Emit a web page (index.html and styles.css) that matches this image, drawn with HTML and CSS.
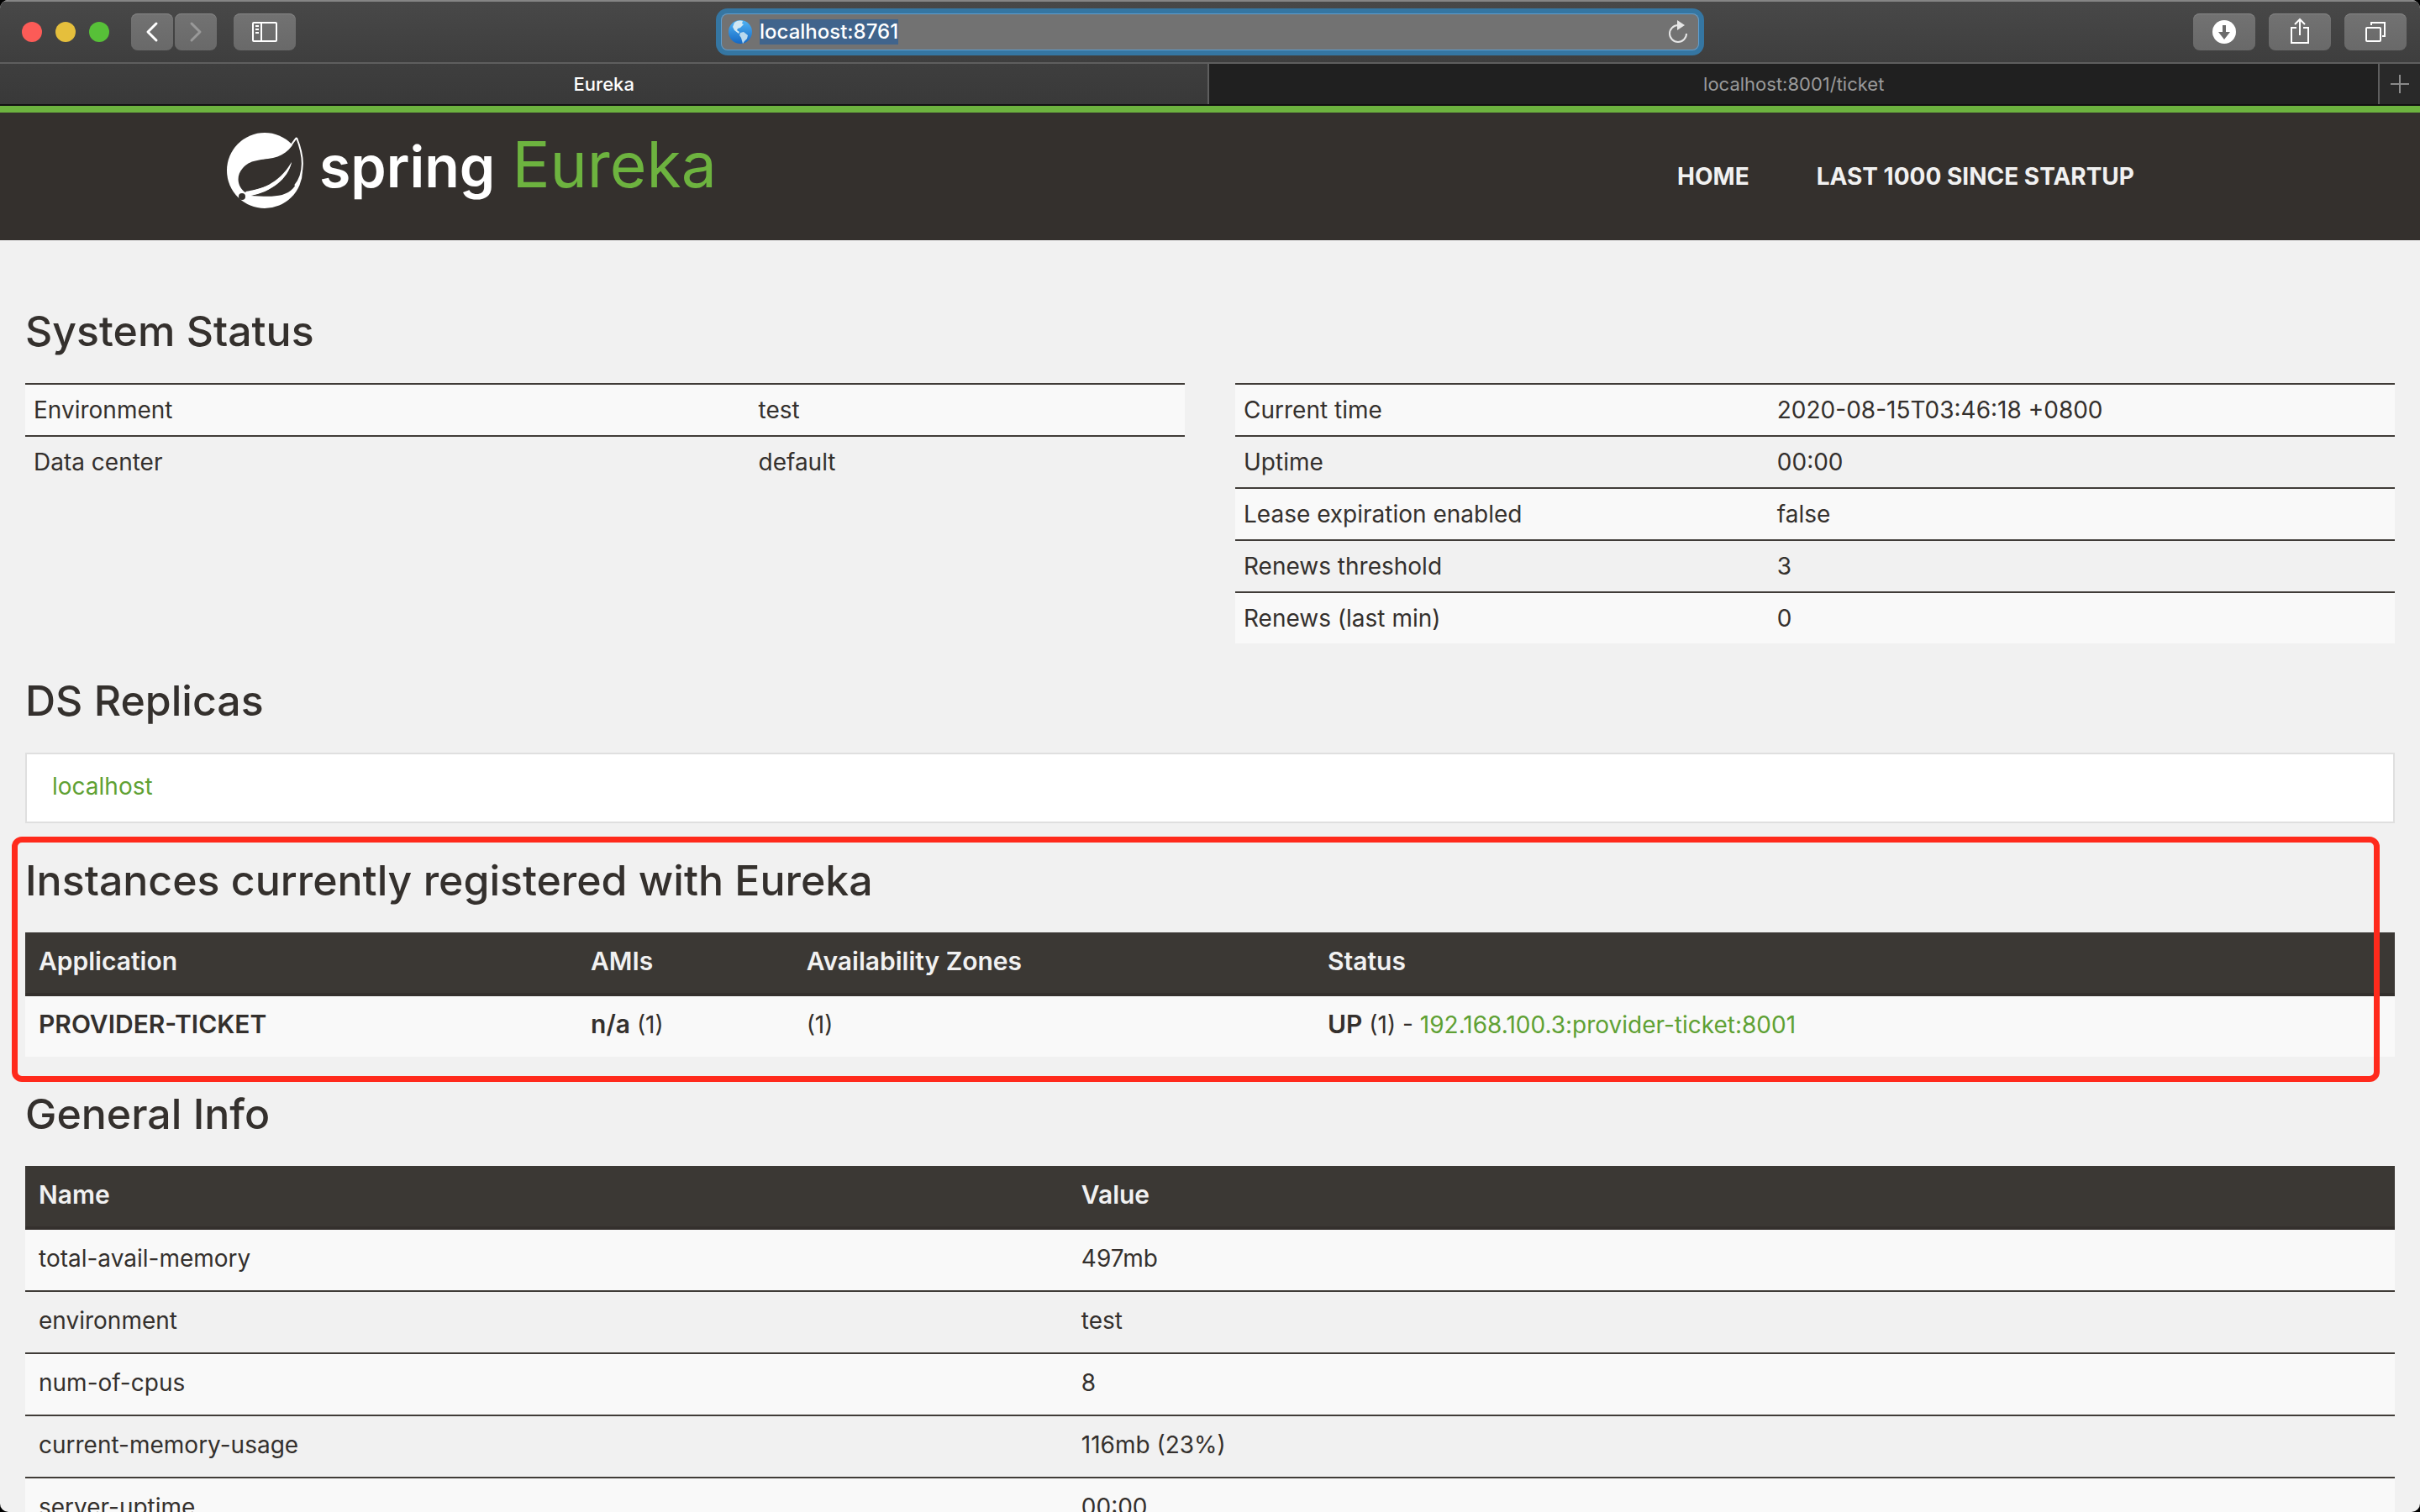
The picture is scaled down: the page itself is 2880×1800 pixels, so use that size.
FILE: index.html
```html
<!DOCTYPE html>
<html lang="en">
<head>
<meta charset="utf-8">
<title>Eureka</title>
<link rel="stylesheet" href="styles.css">
</head>
<body>
<div class="window">
  <header class="toolbar">
    <div class="toolbar-side">
      <div class="lights"><span class="light red"></span><span class="light yellow"></span><span class="light green"></span></div>
      <div class="history">
        <button class="tool narrow" aria-label="Back"><svg width="50" height="44" viewBox="0 0 50 44"><path d="M30 12 20 22l10 10" fill="none" stroke="#fff" stroke-width="3" stroke-linecap="round" stroke-linejoin="round"/></svg></button>
        <button class="tool narrow" aria-label="Forward" disabled><svg width="50" height="44" viewBox="0 0 50 44"><path d="M20 12l10 10-10 10" fill="none" stroke="#999" stroke-width="3" stroke-linecap="round" stroke-linejoin="round"/></svg></button>
      </div>
      <button class="tool" aria-label="Show sidebar"><svg width="74" height="44" viewBox="0 0 74 44" fill="none" stroke="#fff" stroke-width="2"><rect x="23" y="11" width="28" height="22" rx="1"/><path d="M33 11v22M26 15h4M26 19h4M26 23h4"/></svg></button>
    </div>
    <form class="address">
      <svg width="30" height="30" viewBox="0 0 30 30"><defs><linearGradient id="sea" x1="0" y1="0" x2="0" y2="1"><stop offset="0" stop-color="#4fb4f5"/><stop offset="1" stop-color="#1568c4"/></linearGradient></defs><circle cx="15" cy="15" r="14" fill="url(#sea)"/><path d="M8 4c3-3 8-3 10-2l-1 3 2 1-4 4-3 1-1 2 3 2-1 2-5-4-2-4z" fill="#cfe8f5"/><path d="M15 16l4-1 5 4-1 4-3 3-2 3-2-7-2-3z" fill="#b9d9ee"/></svg>
      <input class="url" type="text" value="localhost:8761" aria-label="Address" autofocus>
      <button class="reload" type="button" aria-label="Reload"><svg width="26" height="30" viewBox="0 0 26 30"><path d="M13 7a10 10 0 1 0 10 10" fill="none" stroke="#e6e6e6" stroke-width="2"/><path d="M12 1l9 6-9 6z" fill="#e6e6e6"/></svg></button>
    </form>
    <div class="toolbar-side end">
      <button class="tool" aria-label="Downloads"><svg width="74" height="44" viewBox="0 0 74 44"><circle cx="37" cy="22" r="14" fill="#fff"/><path d="M35 14h4v8h5l-7 9-7-9h5z" fill="#6b6b6b"/></svg></button>
      <button class="tool" aria-label="Share"><svg width="74" height="44" viewBox="0 0 74 44" fill="none" stroke="#fff" stroke-width="2"><path d="M33 17h-6v18h20V17h-6M37 26V8M31 13l6-6 6 6"/></svg></button>
      <button class="tool" aria-label="Show all tabs"><svg width="74" height="44" viewBox="0 0 74 44" fill="none" stroke="#fff" stroke-width="2"><rect x="26" y="17" width="17" height="16" rx="1"/><path d="M32 14v-3h16v16h-3"/></svg></button>
    </div>
  </header>
  <div class="tabs">
    <button class="tab active">Eureka</button>
    <button class="tab">localhost:8001/ticket</button>
    <button class="new-tab" aria-label="New tab"><svg width="24" height="24" viewBox="0 0 24 24"><path d="M12 1v22M1 12h22" stroke="#8a8a8a" stroke-width="2"/></svg></button>
  </div>

  <div class="page">
    <nav class="navbar">
      <a class="brand" href="#">
        <svg class="leaf" width="92" height="92" viewBox="0 0 92 92"><circle cx="45" cy="45" r="45" fill="#fff"/><path d="M83 5C80 15 70 27 55 30C38 33 28 32 19 42C10 52 13 65 22 71C40 67 61 62 77 35C72 54 55 69 28 75C50 76 68 78 79 66C94 48 92 30 83 5Z" fill="#34302d"/><path d="M83 6C80 9 79 12 76 15M83 6C91 26 94 47 81 63" fill="none" stroke="#fff" stroke-width="2"/><path d="M22 70C40 67 65 62 77 35C73 55 52 71 28 75z" fill="#fff"/><circle cx="18" cy="76" r="4" fill="#34302d"/></svg>
        <span class="brand-text"><span class="brand-spring">spring</span><span class="brand-eureka">Eureka</span></span>
      </a>
      <div class="nav-links"><a href="#">HOME</a><a href="#">LAST 1000 SINCE STARTUP</a></div>
    </nav>

    <main class="content">
      <section>
        <h1>System Status</h1>
        <div class="columns">
          <table class="compact environment">
            <tbody>
              <tr><td>Environment</td><td>test</td></tr>
              <tr><td>Data center</td><td>default</td></tr>
            </tbody>
          </table>
          <table class="compact runtime">
            <tbody>
              <tr><td>Current time</td><td>2020-08-15T03:46:18 +0800</td></tr>
              <tr><td>Uptime</td><td>00:00</td></tr>
              <tr><td>Lease expiration enabled</td><td>false</td></tr>
              <tr><td>Renews threshold</td><td>3</td></tr>
              <tr><td>Renews (last min)</td><td>0</td></tr>
            </tbody>
          </table>
        </div>
      </section>
      <section>
        <h1>DS Replicas</h1>
        <div class="replicas"><a href="#">localhost</a></div>
      </section>
      <section class="instances">
        <h1>Instances currently registered with Eureka</h1>
        <table class="wide">
          <thead><tr><th class="col-app">Application</th><th class="col-ami">AMIs</th><th class="col-zone">Availability Zones</th><th>Status</th></tr></thead>
          <tbody><tr><td><b>PROVIDER-TICKET</b></td><td><b>n/a</b> (1)</td><td>(1)</td><td><b>UP</b> (1) - <a href="#">192.168.100.3:provider-ticket:8001</a></td></tr></tbody>
        </table>
        <div class="marker"></div>
      </section>
      <section>
        <h1>General Info</h1>
        <table class="wide">
          <thead><tr><th class="col-name">Name</th><th>Value</th></tr></thead>
          <tbody>
            <tr><td>total-avail-memory</td><td>497mb</td></tr>
            <tr><td>environment</td><td>test</td></tr>
            <tr><td>num-of-cpus</td><td>8</td></tr>
            <tr><td>current-memory-usage</td><td>116mb (23%)</td></tr>
            <tr><td>server-uptime</td><td>00:00</td></tr>
          </tbody>
        </table>
      </section>
    </main>
  </div>
</div>
<script src="main.js"></script>
</body>
</html>
```
FILE: main.js
```js
const url = document.querySelector('.url');
url.focus();
url.select();
```
FILE: styles.css
```css
* { box-sizing: border-box; }
body { margin: 0; background: #000; font-family: Inter, "Noto Sans", sans-serif; font-size: 28px; line-height: 40px; color: #34302d; }
button { border: 0; padding: 0; background: none; font: inherit; color: inherit; }
svg { display: block; }
a { color: #5fa134; text-decoration: none; }

.window { height: 100vh; display: flex; flex-direction: column; overflow: hidden; border-radius: 10px; background: #f1f1f1; }

/* browser toolbar */
.toolbar { flex: none; height: 76px; display: flex; justify-content: space-between; align-items: center; padding: 0 16px; border-top: 2px solid #858585; border-bottom: 2px solid #5e5e5e; background: linear-gradient(#484848, #3e3e3e); }
.toolbar-side { flex: 1; display: flex; align-items: center; gap: 20px; }
.toolbar-side.end { justify-content: flex-end; gap: 16px; }
.lights { display: flex; gap: 16px; margin: 0 6px 0 10px; }
.light { width: 24px; height: 24px; border-radius: 50%; }
.red { background: #fc5b57; }
.yellow { background: #e5bf3c; }
.green { background: #57c038; }
.history { display: flex; gap: 2px; }
.tool { width: 74px; height: 44px; border-radius: 8px; background: linear-gradient(#727272, #696969); box-shadow: inset 0 1px #858585; }
.tool.narrow { width: 50px; }
.address { width: 1164px; max-width: 50%; height: 44px; display: flex; align-items: center; gap: 8px; padding: 0 12px 0 8px; border-radius: 8px; background: #727272; box-shadow: inset 0 0 0 1px #5f9fd0, 0 0 0 6px #3576a2; }
.url { flex: 1; height: 30px; padding: 0; border: 0; outline: 0; background: none; color: #fff; font: 500 24px/30px Inter, sans-serif; }
.url::selection { background: #40648c; color: #fff; }

/* tab strip */
.tabs { flex: none; height: 50px; display: flex; border-bottom: 2px solid #111; background: #202020; font-size: 22px; }
.tab { flex: 1393; border-right: 2px solid #5e5e5e; color: #9a9a9a; }
.tab.active { flex: 1440; background: linear-gradient(#3e3e3e, #393939); color: #fff; font-weight: 500; }
.new-tab { width: 48px; display: flex; align-items: center; justify-content: center; background: #292929; }

/* page */
.page { flex: 1; min-height: 0; overflow: hidden; }
.navbar { height: 160px; display: flex; justify-content: space-between; padding: 24px 340px 0 270px; border-top: 8px solid #6db33f; background: #34302d; }
.brand { display: flex; align-items: flex-start; }
.leaf { margin-right: 18px; }
.brand-text { display: flex; align-items: baseline; gap: 20px; line-height: 76px; }
.brand-spring { color: #fff; font-size: 68px; font-weight: 600; }
.brand-eureka { color: #6db33f; font-size: 75px; }
.nav-links { display: flex; gap: 80px; padding-top: 32px; }
.nav-links a { color: #f1f1f1; font-weight: 700; }

.content { padding: 40px 30px 0; }
h1 { margin: 0; padding: 42px 0 36px; font-size: 50px; line-height: 52px; font-weight: 500; }
.columns { display: grid; grid-template-columns: 1fr 1fr; gap: 60px; align-items: start; }
table { width: 100%; border-spacing: 0; table-layout: fixed; }
tbody tr:nth-child(odd) { background: #f9f9f9; }
td, th { text-align: left; vertical-align: top; }
.compact td { padding: 10px; border-top: 2px solid #403c38; }
.environment td:first-child { width: 62.5%; }
.runtime td:first-child { width: 46%; }
.replicas { padding: 18px 30px 22px; border: 2px solid #dfdfdf; background: #fff; }
.wide th { padding: 14px 16px 18px; border-bottom: 4px solid #34302d; background: #3b3834; color: #f1f1f1; font-size: 30px; font-weight: 600; }
.wide td { height: 72px; padding: 14px 16px 16px; }
.wide tr + tr td { height: 74px; border-top: 2px solid #403c38; }
.wide b { font-size: 30px; line-height: 36px; font-weight: 600; }
.col-app { width: 23.3%; }
.col-ami { width: 9.1%; }
.col-zone { width: 22%; }
.col-name { width: 44%; }

/* highlight drawn over the instances section */
.instances { position: relative; }
.marker { position: absolute; inset: 16px 18px -30px -16px; border: 7px solid #ff2a1c; border-radius: 12px; }
```
